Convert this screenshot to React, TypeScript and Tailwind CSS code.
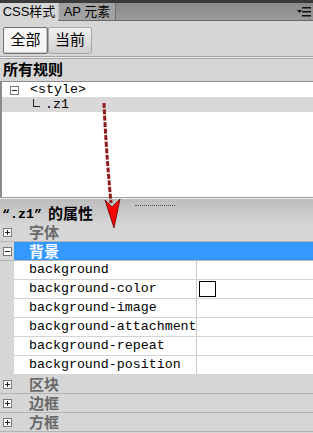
import React from "react";

const mono = { fontFamily: '"Liberation Mono", "DejaVu Sans Mono", monospace' };
const cjk = { fontFamily: '"Liberation Sans", "Noto Sans CJK SC", sans-serif' };

function Box({ plus }: { plus?: boolean }) {
  return (
    <svg width="9" height="9" viewBox="0 0 9 9" className="block">
      <rect x="0.5" y="0.5" width="8" height="8" fill="#ffffff" stroke="#7a7a7a" />
      <line x1="2" y1="4.5" x2="7" y2="4.5" stroke="#222" />
      {plus && <line x1="4.5" y1="2" x2="4.5" y2="7" stroke="#222" />}
    </svg>
  );
}

function Category({ label, open, selected }: { label: string; open?: boolean; selected?: boolean }) {
  return (
    <div className="flex h-[19px] border-b border-[#b4b4b4] bg-[#d6d6d6]">
      <div className="w-[14px] flex items-center pl-[3px]">
        <Box plus={!open} />
      </div>
      <div
        className={`flex-1 flex items-center pl-[15px] text-[15px] font-bold leading-none ${
          selected ? "bg-[#3399ff] text-white" : "text-[#6a6a6a]"
        }`}
        style={cjk}
      >
        {label}
      </div>
    </div>
  );
}

function Prop({ name, color }: { name: string; color?: boolean }) {
  return (
    <div className="flex h-[19px]">
      <div className="w-[14px] bg-[#d6d6d6]" />
      <div className="flex-1 flex bg-white border-b border-[#d4d4d4]">
        <div
          className="w-[183px] border-r border-[#c8c8c8] flex items-center pl-[15px] text-[13.3px] leading-none text-black whitespace-nowrap overflow-hidden"
          style={mono}
        >
          {name}
        </div>
        <div className="flex-1 flex items-center pl-[2px]">
          {color && <div className="w-[17px] h-[16px] border border-black bg-white" />}
        </div>
      </div>
    </div>
  );
}

export default function App() {
  return (
    <div className="relative w-[313px] h-[433px] overflow-hidden bg-[#d6d6d6] flex flex-col select-none">
      {/* top dark strip */}
      <div className="h-[3px] bg-[#3a3a3a]" />
      {/* tab bar */}
      <div className="h-[18px] flex bg-gradient-to-b from-[#8a8a8a] to-[#9a9a9a] border-b border-[#6a6a6a]">
        <div
          className="w-[58px] bg-[#d6d6d6] flex items-center justify-center text-[13px] text-black -mb-px"
          style={cjk}
        >
          CSS样式
        </div>
        <div
          className="w-[58px] bg-[#a2a2a2] border-l border-[#c4c4c4] border-r border-r-[#707070] flex items-center justify-center text-[13px] text-black"
          style={cjk}
        >
          AP 元素
        </div>
        <div className="flex-1 flex items-center justify-end pr-[1px]">
          <svg width="16" height="12" viewBox="0 0 16 12">
            <polygon points="1,4 6,4 3.5,7" fill="#111" />
            <rect x="6" y="1" width="9" height="1.5" fill="#111" />
            <rect x="6" y="5" width="9" height="1.5" fill="#111" />
            <rect x="6" y="9" width="9" height="1.5" fill="#111" />
          </svg>
        </div>
      </div>
      {/* toolbar */}
      <div className="h-[35px] flex items-center pl-[3px] pt-[3px]">
        <div
          className="h-[27px] w-[45px] flex items-center justify-center bg-[#f6f6f6] border border-[#707070] rounded-[2px] text-[15px] text-black shadow-[inset_-1px_-1px_0_#c8c8c8]"
          style={cjk}
        >
          全部
        </div>
        <div
          className="h-[27px] w-[44px] flex items-center justify-center bg-gradient-to-b from-[#f0f0f0] to-[#cfcfcf] border border-[#a8a8a8] rounded-[2px] text-[15px] text-black"
          style={cjk}
        >
          当前
        </div>
      </div>
      <div className="h-px bg-[#a4a4a4]" />
      <div className="h-px bg-[#ececec]" />
      <div className="h-px bg-[#a8a8a8]" />
      {/* all rules header */}
      <div
        className="h-[23px] flex items-center pl-[3px] text-[15px] font-bold text-black border-b border-[#8c8c8c]"
        style={cjk}
      >
        所有规则
      </div>
      {/* tree */}
      <div className="h-[115px] bg-white border-l-2 border-[#8a8a8a] pt-px text-[13.3px] leading-none text-black" style={mono}>
        <div className="h-[14px] flex items-center">
          <div className="w-[8px]" />
          <Box />
          <span className="ml-[11px]">&lt;style&gt;</span>
        </div>
        <div className="h-[15px] flex items-center bg-[#d8d8d8]">
          <div className="w-[31px]" />
          <div className="w-[7px] h-[8px] border-l border-b border-[#222] -mt-[4px]" />
          <span className="ml-[5px]">.z1</span>
        </div>
      </div>
      <div className="h-px bg-[#9c9c9c]" />
      <div className="h-px bg-[#f0f0f0]" />
      {/* properties header */}
      <div className="h-[24px] relative bg-gradient-to-b from-[#bcbcbc] to-[#d4d4d4] flex items-end pb-[2px] pl-[2px] text-black font-bold">
        <div className="absolute left-[135px] top-[6px] w-[40px] border-t border-dotted border-[#555]" />
        <span className="text-[13.3px] leading-none" style={mono}>“.z1”</span>
        <span className="ml-[6px] text-[15px] leading-none" style={cjk}>的属性</span>
      </div>
      {/* property rows */}
      <Category label="字体" />
      <Category label="背景" open selected />
      <Prop name="background" />
      <Prop name="background-color" color />
      <Prop name="background-image" />
      <Prop name="background-attachment" />
      <Prop name="background-repeat" />
      <Prop name="background-position" />
      <Category label="区块" />
      <Category label="边框" />
      <Category label="方框" />

      {/* red annotation arrow */}
      <svg className="absolute left-0 top-0 pointer-events-none" width="313" height="433" viewBox="0 0 313 433">
        <path d="M104 103 Q106 150 111 203" fill="none" stroke="#8e1b1b" strokeWidth="3" strokeDasharray="5 1.5" />
        <polygon points="105,200 112,207 120,199 114,228" fill="#ff0000" stroke="#5a0000" strokeWidth="0.8" strokeLinejoin="round" />
      </svg>
    </div>
  );
}
